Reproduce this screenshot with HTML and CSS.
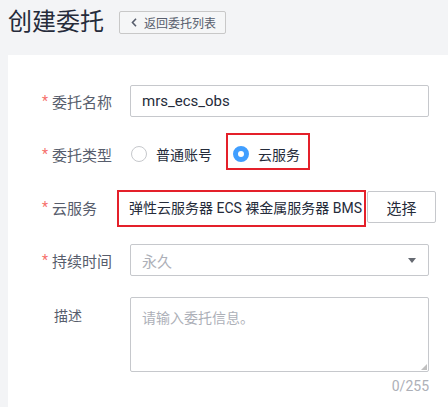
FILE: index.html
```html
<!DOCTYPE html>
<html lang="zh-CN">
<head>
<meta charset="utf-8">
<link rel="stylesheet" href="styles.css">
</head>
<body>
<div class="page">
  <div class="header">
    <h1 class="title">创建委托</h1>
    <button class="back-btn"><svg class="chev" width="6" height="9" viewBox="0 0 6 9"><path d="M5 0.8 L1.5 4.5 L5 8.2" fill="none" stroke="#575d6c" stroke-width="1.6"/></svg><span>返回委托列表</span></button>
  </div>
  <div class="card">
    <div class="row">
      <div class="label"><span class="star">*</span>委托名称</div>
      <div class="control"><div class="input">mrs_ecs_obs</div></div>
    </div>
    <div class="row">
      <div class="label"><span class="star">*</span>委托类型</div>
      <div class="control radios">
        <div class="radio"><span class="dot"></span><span>普通账号</span></div>
        <div class="radio checked"><span class="dot"></span><span>云服务</span><span class="mark mark-radio"></span></div>
      </div>
    </div>
    <div class="row">
      <div class="label"><span class="star">*</span>云服务</div>
      <div class="control service">
        <div class="service-text">弹性云服务器 ECS 裸金属服务器 BMS</div>
        <button class="pick-btn">选择</button>
        <span class="mark mark-service"></span>
      </div>
    </div>
    <div class="row">
      <div class="label"><span class="star">*</span>持续时间</div>
      <div class="control"><div class="input select"><span class="placeholder">永久</span><span class="caret"></span></div></div>
    </div>
    <div class="row row-top">
      <div class="label label-plain">描述</div>
      <div class="control">
        <div class="textarea"><span class="placeholder">请输入委托信息。</span><span class="grip"></span></div>
        <div class="counter">0/255</div>
      </div>
    </div>
  </div>
</div>
</body>
</html>
```
FILE: styles.css
```css
* { box-sizing: border-box; }
html, body { margin: 0; padding: 0; }
body {
  background: #f3f4f6;
  font-family: Roboto, "Noto Sans CJK SC", sans-serif;
  color: #252b3a;
  font-size: 14px;
  width: 448px;
  height: 407px;
  overflow: hidden;
}
.page { padding: 6px 0 0 8px; }
.header {
  display: flex;
  align-items: center;
  height: 32px;
  margin-bottom: 17px;
}
.title {
  margin: 0;
  font-size: 24px;
  font-weight: 400;
  line-height: 32px;
  color: #252b3a;
}
.back-btn {
  margin-left: 15px;
  height: 23px;
  width: 107px;
  border: 1px solid #c8c8c8;
  background: #f5f6f7;
  display: flex;
  align-items: center;
  padding: 0 0 0 11px;
  font-family: inherit;
  font-size: 12px;
  color: #575d6c;
  border-radius: 2px;
}
.back-btn .chev { margin-right: 7px; }
.card {
  background: #fff;
  padding: 30px 0 0 34px;
  height: 352px;
}
.row {
  display: flex;
  align-items: center;
  min-height: 32px;
  margin-bottom: 21px;
}
.row-top { align-items: flex-start; margin-bottom: 0; }
.label {
  width: 88px;
  flex: none;
  color: #575d6c;
  font-size: 15px;
  display: flex;
  align-items: center;
}
.star {
  color: #f66f6a;
  width: 10px;
  font-size: 14px;
}
.label-plain { padding-left: 12px; padding-top: 8px; font-size: 14px; }
.control {
  width: 299px;
  flex: none;
  position: relative;
}
.input {
  height: 32px;
  border: 1px solid #c6c8cc;
  border-radius: 2px;
  display: flex;
  align-items: center;
  padding: 0 11px;
  font-size: 15px;
}
.select { justify-content: space-between; padding-right: 12px; }
.placeholder { color: #adb0b8; }
.caret {
  width: 0; height: 0;
  border-left: 4.5px solid transparent;
  border-right: 4.5px solid transparent;
  border-top: 5px solid #666a72;
}
.radios { display: flex; align-items: center; height: 32px; }
.radio {
  display: flex;
  align-items: center;
  position: relative;
  margin-right: 20px;
  color: #252b3a;
}
.radio .dot {
  width: 16px;
  height: 16px;
  border: 1px solid #c6c8cc;
  border-radius: 50%;
  margin-right: 9px;
  margin-left: 1px;
}
.radio.checked .dot {
  border: 5px solid #409eff;
  background: #fff;
}
.mark {
  position: absolute;
  border: 2px solid #e4202a;
  pointer-events: none;
}
.radio.checked { height: 32px; }
.mark-radio {
  left: -6px;
  top: -5px;
  width: 84px;
  height: 37px;
}
.service { display: flex; align-items: center; height: 32px; }
.service-text {
  width: 238px;
  flex: none;
  margin-left: -1px;
  font-size: 14px;
  white-space: nowrap;
}
.pick-btn {
  width: 69px;
  height: 32px;
  flex: none;
  border: 1px solid #c6c8cc;
  background: #fff;
  border-radius: 2px;
  font-family: inherit;
  font-size: 15px;
  color: #252b3a;
}
.mark-service {
  left: -13px;
  top: -1px;
  width: 249px;
  height: 37px;
}
.textarea {
  height: 75px;
  border: 1px solid #c6c8cc;
  border-radius: 2px;
  padding: 9px 11px;
  position: relative;
  font-size: 14px;
}
.grip {
  position: absolute;
  right: 1px;
  bottom: 1px;
  width: 0; height: 0;
  border-left: 6px solid transparent;
  border-bottom: 6px solid #c0c0c0;
}
.counter {
  text-align: right;
  color: #adb0b8;
  font-size: 14px;
  margin-top: 6px;
}
```
